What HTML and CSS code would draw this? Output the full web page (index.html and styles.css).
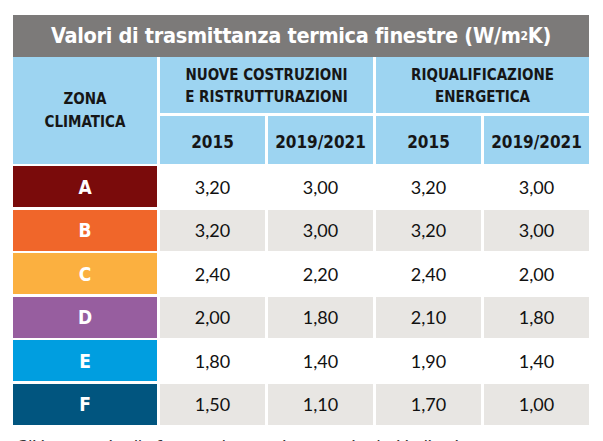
FILE: index.html
```html
<!DOCTYPE html>
<html lang="it">
<head>
<meta charset="utf-8">
<title>Valori di trasmittanza termica finestre</title>
<link rel="stylesheet" href="styles.css">
</head>
<body>
<div class="page">
  <div class="title">Valori di trasmittanza termica finestre (W/m<sup>2</sup>K)</div>
  <div class="grid">
    <div class="hd zone-h">ZONA<br>CLIMATICA</div>
    <div class="hd group">NUOVE COSTRUZIONI<br>E RISTRUTTURAZIONI</div>
    <div class="hd group">RIQUALIFICAZIONE<br>ENERGETICA</div>
    <div class="hd year">2015</div>
    <div class="hd year">2019/2021</div>
    <div class="hd year">2015</div>
    <div class="hd year">2019/2021</div>

    <div class="zone za">A</div>
    <div class="val">3,20</div><div class="val">3,00</div><div class="val">3,20</div><div class="val">3,00</div>

    <div class="zone zb">B</div>
    <div class="val alt">3,20</div><div class="val alt">3,00</div><div class="val alt">3,20</div><div class="val alt">3,00</div>

    <div class="zone zc">C</div>
    <div class="val">2,40</div><div class="val">2,20</div><div class="val">2,40</div><div class="val">2,00</div>

    <div class="zone zd">D</div>
    <div class="val alt">2,00</div><div class="val alt">1,80</div><div class="val alt">2,10</div><div class="val alt">1,80</div>

    <div class="zone ze">E</div>
    <div class="val">1,80</div><div class="val">1,40</div><div class="val">1,90</div><div class="val">1,40</div>

    <div class="zone zf">F</div>
    <div class="val alt">1,50</div><div class="val alt">1,10</div><div class="val alt">1,70</div><div class="val alt">1,00</div>
  </div>
  <p class="caption">Gli interventi sulle finestre devono rispettare i valori indicati</p>
</div>
</body>
</html>
```

FILE: styles.css
```css
html, body {
  margin: 0;
  padding: 0;
  background: #ffffff;
}

.page {
  width: 576px;
  padding: 15px 0 0 13px;
}

.title {
  height: 42px;
  background: #7c7a79;
  color: #ffffff;
  font-family: "DejaVu Sans Condensed", "Liberation Sans Narrow", sans-serif;
  font-weight: bold;
  font-size: 21.5px;
  letter-spacing: -0.3px;
  display: flex;
  align-items: center;
  justify-content: center;
  line-height: 1;
}

.title sup {
  font-size: 12px;
  vertical-align: 8px;
  line-height: 0;
}

.grid {
  display: grid;
  grid-template-columns: 144px 105px 105px 105px 105px;
  grid-template-rows: 56px 48px repeat(6, 41px);
  column-gap: 3px;
  row-gap: 2.5px;
}

.hd {
  background: #9dd4f1;
  color: #161616;
  font-family: "DejaVu Sans Condensed", "Liberation Sans Narrow", sans-serif;
  font-weight: bold;
  display: flex;
  align-items: center;
  justify-content: center;
  text-align: center;
}

.zone-h {
  grid-row: 1 / 3;
  font-size: 15px;
  line-height: 23px;
  padding-top: 2px;
}

.group {
  grid-column: span 2;
  font-size: 15px;
  line-height: 22px;
  padding-top: 2px;
}

.year {
  font-size: 17px;
  padding-top: 4px;
}

.zone {
  color: #ffffff;
  font-family: "DejaVu Sans Condensed", "Liberation Sans Narrow", sans-serif;
  font-weight: bold;
  font-size: 19px;
  display: flex;
  align-items: center;
  justify-content: center;
}

.za { background: #7a0b0b; }
.zb { background: #f0662a; }
.zc { background: #fbb040; }
.zd { background: #975e9f; }
.ze { background: #009ee0; }
.zf { background: #01557f; }

.val {
  font-family: "Lato", "Open Sans", sans-serif;
  font-size: 18px;
  color: #111111;
  display: flex;
  align-items: center;
  justify-content: center;
}

.val.alt {
  background: #e8e6e3;
}

.caption {
  margin: 11px 0 0 3px;
  font-family: "Lato", sans-serif;
  font-size: 17px;
  color: #333333;
  white-space: nowrap;
}
```
